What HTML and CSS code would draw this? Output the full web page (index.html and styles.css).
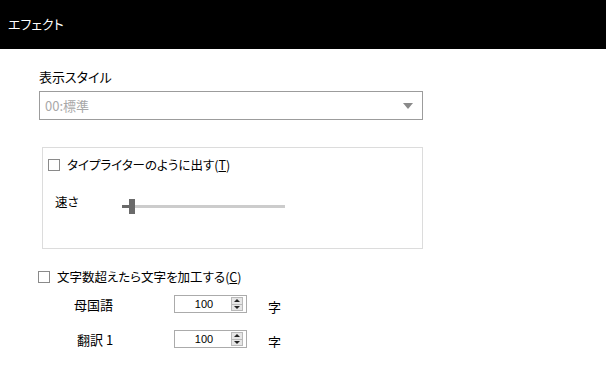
FILE: index.html
```html
<!DOCTYPE html>
<html lang="ja">
  <head>
    <meta charset="UTF-8" />
    <title>エフェクト</title>
    <link rel="stylesheet" href="styles.css">
  </head>
  <body>
    <div class="header">エフェクト</div>

    <div class="content">
      <div class="field-label">表示スタイル</div>
      <div class="select">
        <span class="select-text">00:標準</span>
        <span class="select-arrow"></span>
      </div>

      <div class="group">
        <label class="check">
          <span class="box"></span>
          <span>タイプライターのように出す(<u>T</u>)</span>
        </label>
        <div class="speed-row">
          <span class="speed-label">速さ</span>
          <div class="slider">
            <span class="slider-fill"></span>
            <span class="slider-thumb"></span>
            <span class="slider-track"></span>
          </div>
        </div>
      </div>

      <label class="check check-outer">
        <span class="box"></span>
        <span>文字数超えたら文字を加工する(<u>C</u>)</span>
      </label>

      <div class="limit-row">
        <span class="limit-label">母国語</span>
        <div class="spin">
          <span class="spin-value">100</span>
          <span class="spin-buttons">
            <span class="spin-up"></span>
            <span class="spin-down"></span>
          </span>
        </div>
        <span class="unit">字</span>
      </div>
      <div class="limit-row">
        <span class="limit-label second">翻訳 1</span>
        <div class="spin">
          <span class="spin-value">100</span>
          <span class="spin-buttons">
            <span class="spin-up"></span>
            <span class="spin-down"></span>
          </span>
        </div>
        <span class="unit">字</span>
      </div>
    </div>
  </body>
</html>
```

FILE: styles.css
```css
body {
  margin: 0;
  background-color: #fff;
  font-family: "Noto Sans CJK JP", "Noto Sans", sans-serif;
  font-size: 12.5px;
  font-feature-settings: "palt";
  color: #000;
}

.header {
  height: 49px;
  background-color: #000;
  color: #fff;
  display: flex;
  align-items: center;
  padding-left: 8px;
  font-size: 13px;
  padding-bottom: 3px;
  box-sizing: border-box;
}

.content {
  padding: 19px 0 0 39px;
}

.field-label {
  font-size: 13px;
  line-height: 17px;
  height: 17px;
}

.select {
  margin-top: 6px;
  width: 384px;
  height: 29px;
  box-sizing: border-box;
  border: 1px solid #9c9c9c;
  display: flex;
  align-items: center;
  justify-content: space-between;
  padding: 0 9px 0 5px;
}

.select-text {
  color: #a8a8a8;
  font-size: 13px;
}

.select-arrow {
  width: 0;
  height: 0;
  border-left: 5.5px solid transparent;
  border-right: 5.5px solid transparent;
  border-top: 6px solid #8a8a8a;
}

.group {
  margin: 27px 0 0 3px;
  width: 381px;
  height: 102px;
  box-sizing: border-box;
  border: 1px solid #dcdcdc;
  padding: 11px 0 0 5px;
}

.check {
  display: flex;
  align-items: center;
  gap: 7px;
  line-height: 12px;
}

.check u {
  text-decoration: underline;
}

.box {
  width: 12px;
  height: 12px;
  box-sizing: border-box;
  border: 1px solid #8a8a8a;
  background-color: #fff;
}

.speed-row {
  display: flex;
  align-items: center;
  margin-top: 27px;
  padding-left: 7px;
}

.speed-label {
  width: 67px;
  margin-top: -9px;
}

.slider {
  display: flex;
  align-items: center;
  width: 163px;
  height: 16px;
}

.slider-fill {
  width: 7px;
  height: 3px;
  background-color: #6a6a6a;
}

.slider-thumb {
  width: 6px;
  height: 15px;
  background-color: #6a6a6a;
}

.slider-track {
  flex: 1;
  height: 3px;
  background-color: #cccccc;
}

.check-outer {
  margin: 22px 0 0 -1px;
}

.limit-row {
  display: flex;
  align-items: center;
  height: 18px;
  margin-top: 12px;
}

.limit-row + .limit-row {
  margin-top: 17px;
}

.limit-label {
  width: 100px;
  padding-left: 35px;
  font-size: 13px;
}

.limit-label.second {
  padding-left: 38px;
  width: 97px;
}

.spin {
  width: 73px;
  height: 18px;
  box-sizing: border-box;
  border: 1px solid #ababab;
  display: flex;
  align-items: center;
  padding-right: 3px;
}

.spin-value {
  flex: 1;
  text-align: center;
  font-family: "Liberation Sans", sans-serif;
  font-size: 11px;
  padding-left: 2px;
}

.spin-buttons {
  width: 12px;
  height: 14px;
  box-sizing: border-box;
  border: 1px solid #b9b9b9;
  background-color: #e6e6e6;
  display: flex;
  flex-direction: column;
}

.spin-up,
.spin-down {
  flex: 1;
  display: flex;
  align-items: center;
  justify-content: center;
}

.spin-up {
  border-bottom: 1px solid #b9b9b9;
}

.spin-up::after {
  content: "";
  border-left: 3px solid transparent;
  border-right: 3px solid transparent;
  border-bottom: 3px solid #222;
}

.spin-down::after {
  content: "";
  border-left: 3px solid transparent;
  border-right: 3px solid transparent;
  border-top: 3px solid #222;
}

.unit {
  margin-left: 21px;
  font-size: 13px;
  margin-top: 4px;
}
```
